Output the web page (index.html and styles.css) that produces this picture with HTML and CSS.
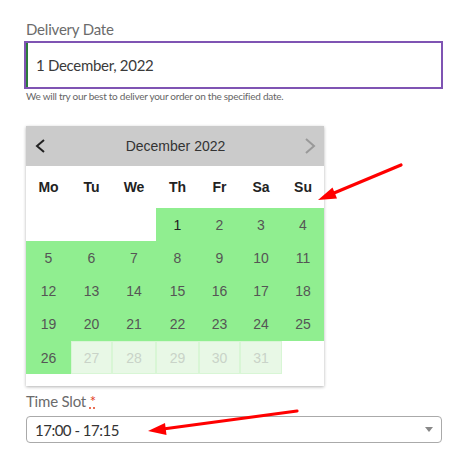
FILE: index.html
```html
<!DOCTYPE html>
<html>
<head>
<meta charset="utf-8">
<link rel="stylesheet" href="styles.css">
</head>
<body>
<div class="page">
  <div class="field">
    <label class="label">Delivery Date</label>
    <div class="input"><span class="input-bar"></span><span class="input-text">1 December, 2022</span></div>
    <p class="help">We will try our best to deliver your order on the specified date.</p>
  </div>

  <div class="calendar">
    <div class="cal-head">
      <svg class="nav" width="14" height="16" viewBox="0 0 14 16"><path d="M10 2 L3 8 L10 14" fill="none" stroke="#222" stroke-width="2"/></svg>
      <span class="cal-title">December 2022</span>
      <svg class="nav" width="14" height="16" viewBox="0 0 14 16"><path d="M3 1 L11 8 L3 15" fill="none" stroke="#999" stroke-width="2"/></svg>
    </div>
    <div class="cal-grid">
      <div class="wd">Mo</div><div class="wd">Tu</div><div class="wd">We</div><div class="wd">Th</div><div class="wd">Fr</div><div class="wd">Sa</div><div class="wd">Su</div>
      <div class="day empty"></div><div class="day empty"></div><div class="day empty"></div>
      <div class="day on sel">1</div><div class="day on">2</div><div class="day on">3</div><div class="day on">4</div>
      <div class="day on">5</div><div class="day on">6</div><div class="day on">7</div><div class="day on">8</div><div class="day on">9</div><div class="day on">10</div><div class="day on">11</div>
      <div class="day on">12</div><div class="day on">13</div><div class="day on">14</div><div class="day on">15</div><div class="day on">16</div><div class="day on">17</div><div class="day on">18</div>
      <div class="day on">19</div><div class="day on">20</div><div class="day on">21</div><div class="day on">22</div><div class="day on">23</div><div class="day on">24</div><div class="day on">25</div>
      <div class="day on">26</div><div class="day off">27</div><div class="day off">28</div><div class="day off">29</div><div class="day off">30</div><div class="day off">31</div><div class="day empty"></div>
    </div>
  </div>

  <div class="field time">
    <label class="label">Time Slot <abbr class="req">*</abbr></label>
    <div class="select"><span class="select-text">17:00 - 17:15</span><span class="caret"></span></div>
  </div>

  <svg class="arrows" width="469" height="467" viewBox="0 0 469 467">
    <line x1="401" y1="165" x2="334" y2="193" stroke="#f00" stroke-width="3.2" stroke-linecap="round"/>
    <polygon points="318,200 332.5,187.5 337,198.5" fill="#f00"/>
    <line x1="297" y1="411" x2="163" y2="429" stroke="#f00" stroke-width="3.2" stroke-linecap="round"/>
    <polygon points="148,431 165,423 166.5,435" fill="#f00"/>
  </svg>
</div>
</body>
</html>
```

FILE: styles.css
```css
html, body {
  margin: 0;
  padding: 0;
  background: #fff;
}

.page {
  position: relative;
  width: 469px;
  height: 467px;
  padding: 17px 0 0 24px;
  box-sizing: border-box;
  font-family: Lato, "Open Sans", sans-serif;
}

.label {
  display: block;
  font-size: 15px;
  letter-spacing: -0.2px;
  line-height: 24px;
  padding-left: 2px;
  color: #6b6b6b;
}

.input {
  display: flex;
  align-items: stretch;
  width: 419px;
  height: 48px;
  border: 2px solid #7f54b3;
  box-sizing: border-box;
}

.input-bar {
  width: 2px;
  background: #2b7a3a;
}

.input-text {
  display: flex;
  align-items: center;
  padding-left: 8px;
  font-size: 15px;
  letter-spacing: -0.3px;
  color: #3a3a3a;
}

.help {
  margin: 0;
  padding-left: 2px;
  font-size: 10px;
  letter-spacing: -0.26px;
  line-height: 14px;
  color: #666;
}

.calendar {
  width: 298px;
  margin: 23px 0 0 2px;
  padding-bottom: 12px;
  background: #fff;
  box-shadow: 0 1px 3px rgba(0, 0, 0, 0.3);
  font-family: "Liberation Sans", Arial, sans-serif;
}

.cal-head {
  height: 40px;
  background: #cbcbcb;
  display: flex;
  align-items: center;
  justify-content: space-between;
  padding: 0 7px 0 8px;
}

.cal-title {
  font-size: 14px;
  color: #333;
}

.cal-grid {
  display: grid;
  grid-template-columns: 45px 41px 44px 43px 41px 42px 42px;
  grid-template-rows: 42px 33px 33px 33px 34px 33px;
}

.wd {
  display: flex;
  align-items: center;
  justify-content: center;
  font-weight: bold;
  font-size: 14px;
  color: #222;
}

.day {
  display: flex;
  align-items: center;
  justify-content: center;
  font-size: 14px;
  color: #555;
  box-sizing: border-box;
}

.day.on {
  background: #90ee90;
}

.day.sel {
  color: #222;
}

.day.off {
  background: #e8f8e6;
  border: 1px solid #d8f6d5;
  color: #c9d3c8;
}

.time .label {
  margin-top: 3px;
}

.req {
  color: #e2401c;
  text-decoration: underline dotted;
  border: none;
}

.select {
  display: flex;
  align-items: center;
  justify-content: space-between;
  width: 416px;
  height: 27px;
  margin: 3px 0 0 2px;
  border: 1px solid #aaa;
  border-radius: 4px;
  box-sizing: border-box;
  padding: 0 8px 0 8px;
}

.select-text {
  font-size: 15px;
  letter-spacing: -0.5px;
  color: #333;
}

.caret {
  width: 0;
  height: 0;
  border-left: 4px solid transparent;
  border-right: 4px solid transparent;
  border-top: 5px solid #888;
}

.arrows {
  position: absolute;
  left: 0;
  top: 0;
  pointer-events: none;
}
```
